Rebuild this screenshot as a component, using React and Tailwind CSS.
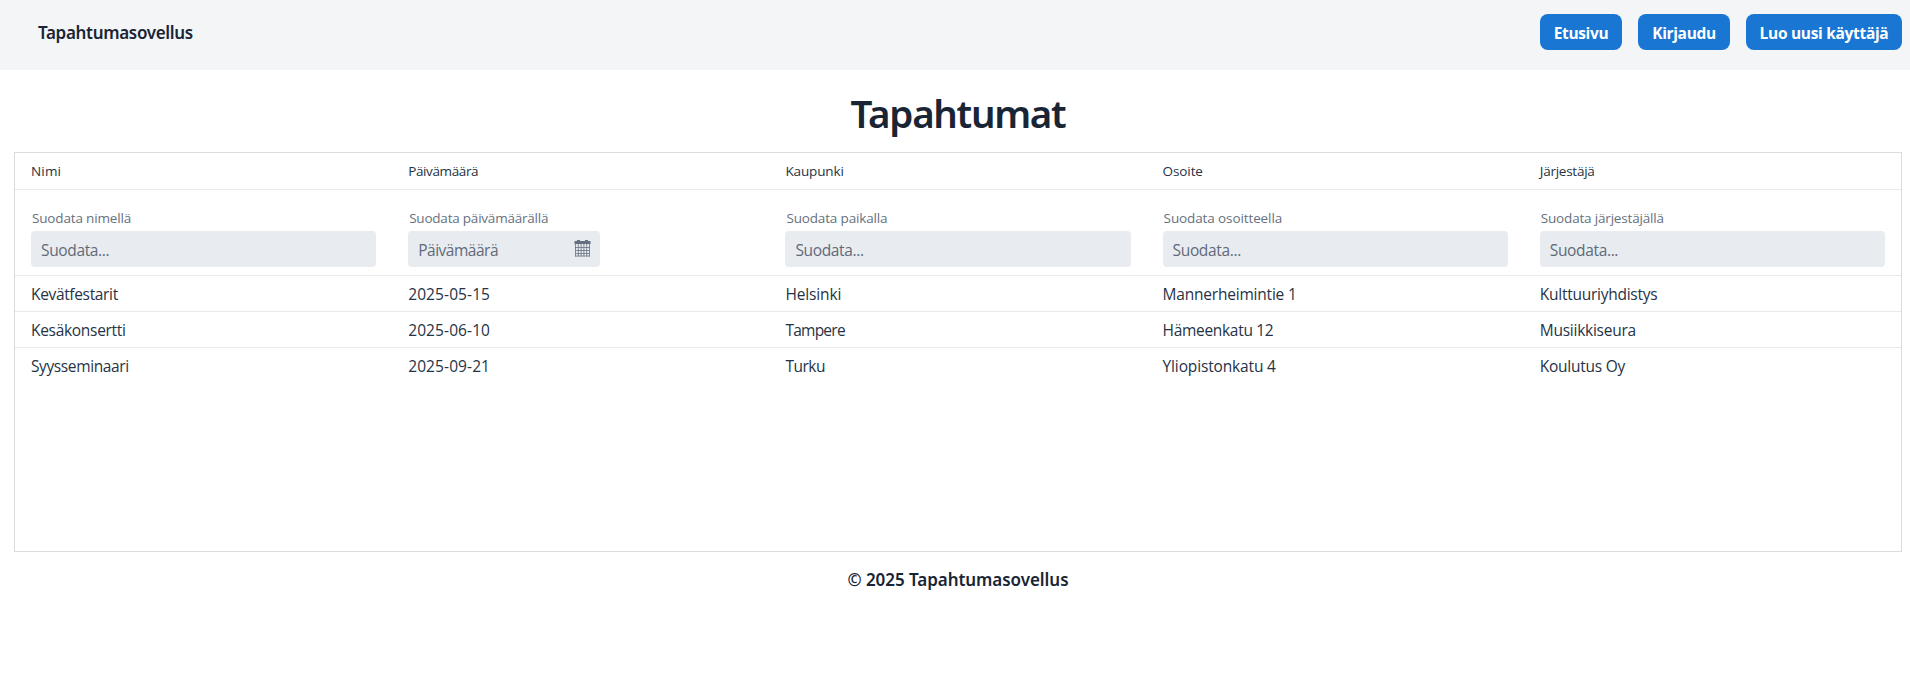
const links = [
  { text: "Etusivu", cls: "w-[82px] tracking-[-0.35px]" },
  { text: "Kirjaudu", cls: "w-[92px] tracking-[-0.34px]" },
  { text: "Luo uusi käyttäjä", cls: "w-[156px] tracking-[-0.31px]" },
];

const columns = [
  { title: "Nimi", titleCls: "tracking-[0.17px]", label: "Suodata nimellä", labelCls: "tracking-[-0.16px]" },
  { title: "Päivämäärä", titleCls: "tracking-[-0.38px]", label: "Suodata päivämäärällä", labelCls: "tracking-[-0.22px]", date: true },
  { title: "Kaupunki", titleCls: "tracking-[-0.13px]", label: "Suodata paikalla", labelCls: "tracking-[-0.15px]" },
  { title: "Osoite", titleCls: "tracking-[-0.1px]", label: "Suodata osoitteella", labelCls: "tracking-[-0.11px]" },
  { title: "Järjestäjä", titleCls: "tracking-[-0.25px]", label: "Suodata järjestäjällä", labelCls: "tracking-[-0.18px]" },
];

const rows = [
  [
    ["Kevätfestarit", "tracking-[-0.34px]"],
    ["2025-05-15", "tracking-[0.1px]"],
    ["Helsinki", "tracking-[-0.13px]"],
    ["Mannerheimintie 1", "tracking-[-0.21px]"],
    ["Kulttuuriyhdistys", "tracking-[-0.26px]"],
  ],
  [
    ["Kesäkonsertti", "tracking-[-0.3px]"],
    ["2025-06-10", "tracking-[0.1px]"],
    ["Tampere", "tracking-[-0.75px]"],
    ["Hämeenkatu 12", "tracking-[-0.31px]"],
    ["Musiikkiseura", "tracking-[-0.26px]"],
  ],
  [
    ["Syysseminaari", "tracking-[-0.39px]"],
    ["2025-09-21", "tracking-[0.1px]"],
    ["Turku", "tracking-[-0.5px]"],
    ["Yliopistonkatu 4", "tracking-[-0.15px]"],
    ["Koulutus Oy", "tracking-[-0.25px]"],
  ],
];

function CalendarIcon() {
  return (
    <svg width="17" height="18" viewBox="0 0 17 18" fill="none" className="shrink-0 text-[#66717f]">
      <path d="M0.5 2H3V1H6V2H11V1H14V2H16.5V5H0.5Z" fill="currentColor" />
      <path
        d="M1.5 5V17.5M4.3 5V17.5M7.1 5V17.5M9.9 5V17.5M12.7 5V17.5M15.5 5V17.5M1 8.5H16M1 11.5H16M1 14.5H16M1 17H16"
        stroke="currentColor"
        strokeWidth="0.8"
      />
    </svg>
  );
}

function Filter({ label, labelCls, date }) {
  return (
    <div className="flex flex-col px-4 pt-[18px]">
      <label className={`h-[23px] pl-px text-[13.5px] leading-5 text-[#667180] ${labelCls}`}>{label}</label>
      <div className={`flex h-9 items-center rounded bg-[#e8ebef] pl-[10px] pr-[9px] ${date ? "w-48" : "w-full"}`}>
        <input
          placeholder={date ? "Päivämäärä" : "Suodata..."}
          className={`h-9 w-0 min-w-0 flex-1 bg-transparent pt-[2px] text-[15.5px] text-[#5f6a79] outline-none placeholder:text-[#5f6a79] placeholder:opacity-100 ${date ? "tracking-[-0.49px]" : "tracking-[-0.35px]"}`}
        />
        {date && (
          <span className="pb-[2px]">
            <CalendarIcon />
          </span>
        )}
      </div>
    </div>
  );
}

export default function App() {
  return (
    <div className="min-h-[695px] bg-white font-['Open_Sans','Noto_Sans',sans-serif] text-[#263345]">
      <header className="flex h-[70px] items-start justify-between bg-[#f3f5f7] pl-[38px] pr-2 pt-[14px]">
        <span className="font-['Noto_Sans',sans-serif] text-[17px] font-semibold leading-[38px] tracking-[-0.32px] text-[#192434]">
          Tapahtumasovellus
        </span>
        <nav className="flex gap-4">
          {links.map((l) => (
            <button
              key={l.text}
              className={`flex h-9 items-center justify-center rounded-lg bg-[#1976d2] pt-[3px] text-[15.5px] font-bold text-white ${l.cls}`}
            >
              {l.text}
            </button>
          ))}
        </nav>
      </header>
      <main className="pl-[14px] pr-2">
        <h1 className="h-[82px] pt-[17px] text-center font-['Noto_Sans',sans-serif] text-[38.5px] font-semibold leading-[52px] tracking-[-1.3px] text-[#192434]">
          Tapahtumat
        </h1>
        <section className="h-[400px] border border-[#dadce1]">
          <div className="grid h-[37px] grid-cols-5 border-b border-[#e8e9eb]">
            {columns.map((c) => (
              <div key={c.title} className={`px-4 text-[13.5px] leading-[37px] ${c.titleCls}`}>
                {c.title}
              </div>
            ))}
          </div>
          <div className="grid h-[86px] grid-cols-5 border-b border-[#e8e9eb]">
            {columns.map((c) => (
              <Filter key={c.label} {...c} />
            ))}
          </div>
          {rows.map((r, i) => (
            <div key={i} className="grid h-9 grid-cols-5 border-b border-[#e8e9eb] last:border-transparent">
              {r.map(([text, cls]) => (
                <div key={text} className={`px-4 text-[15.5px] leading-[37px] ${cls}`}>
                  {text}
                </div>
              ))}
            </div>
          ))}
        </section>
        <footer className="pt-[14px] text-center font-['Noto_Sans',sans-serif] text-[17px] font-semibold leading-7 tracking-[-0.05px] text-[#192434]">
          © 2025 Tapahtumasovellus
        </footer>
      </main>
    </div>
  );
}
